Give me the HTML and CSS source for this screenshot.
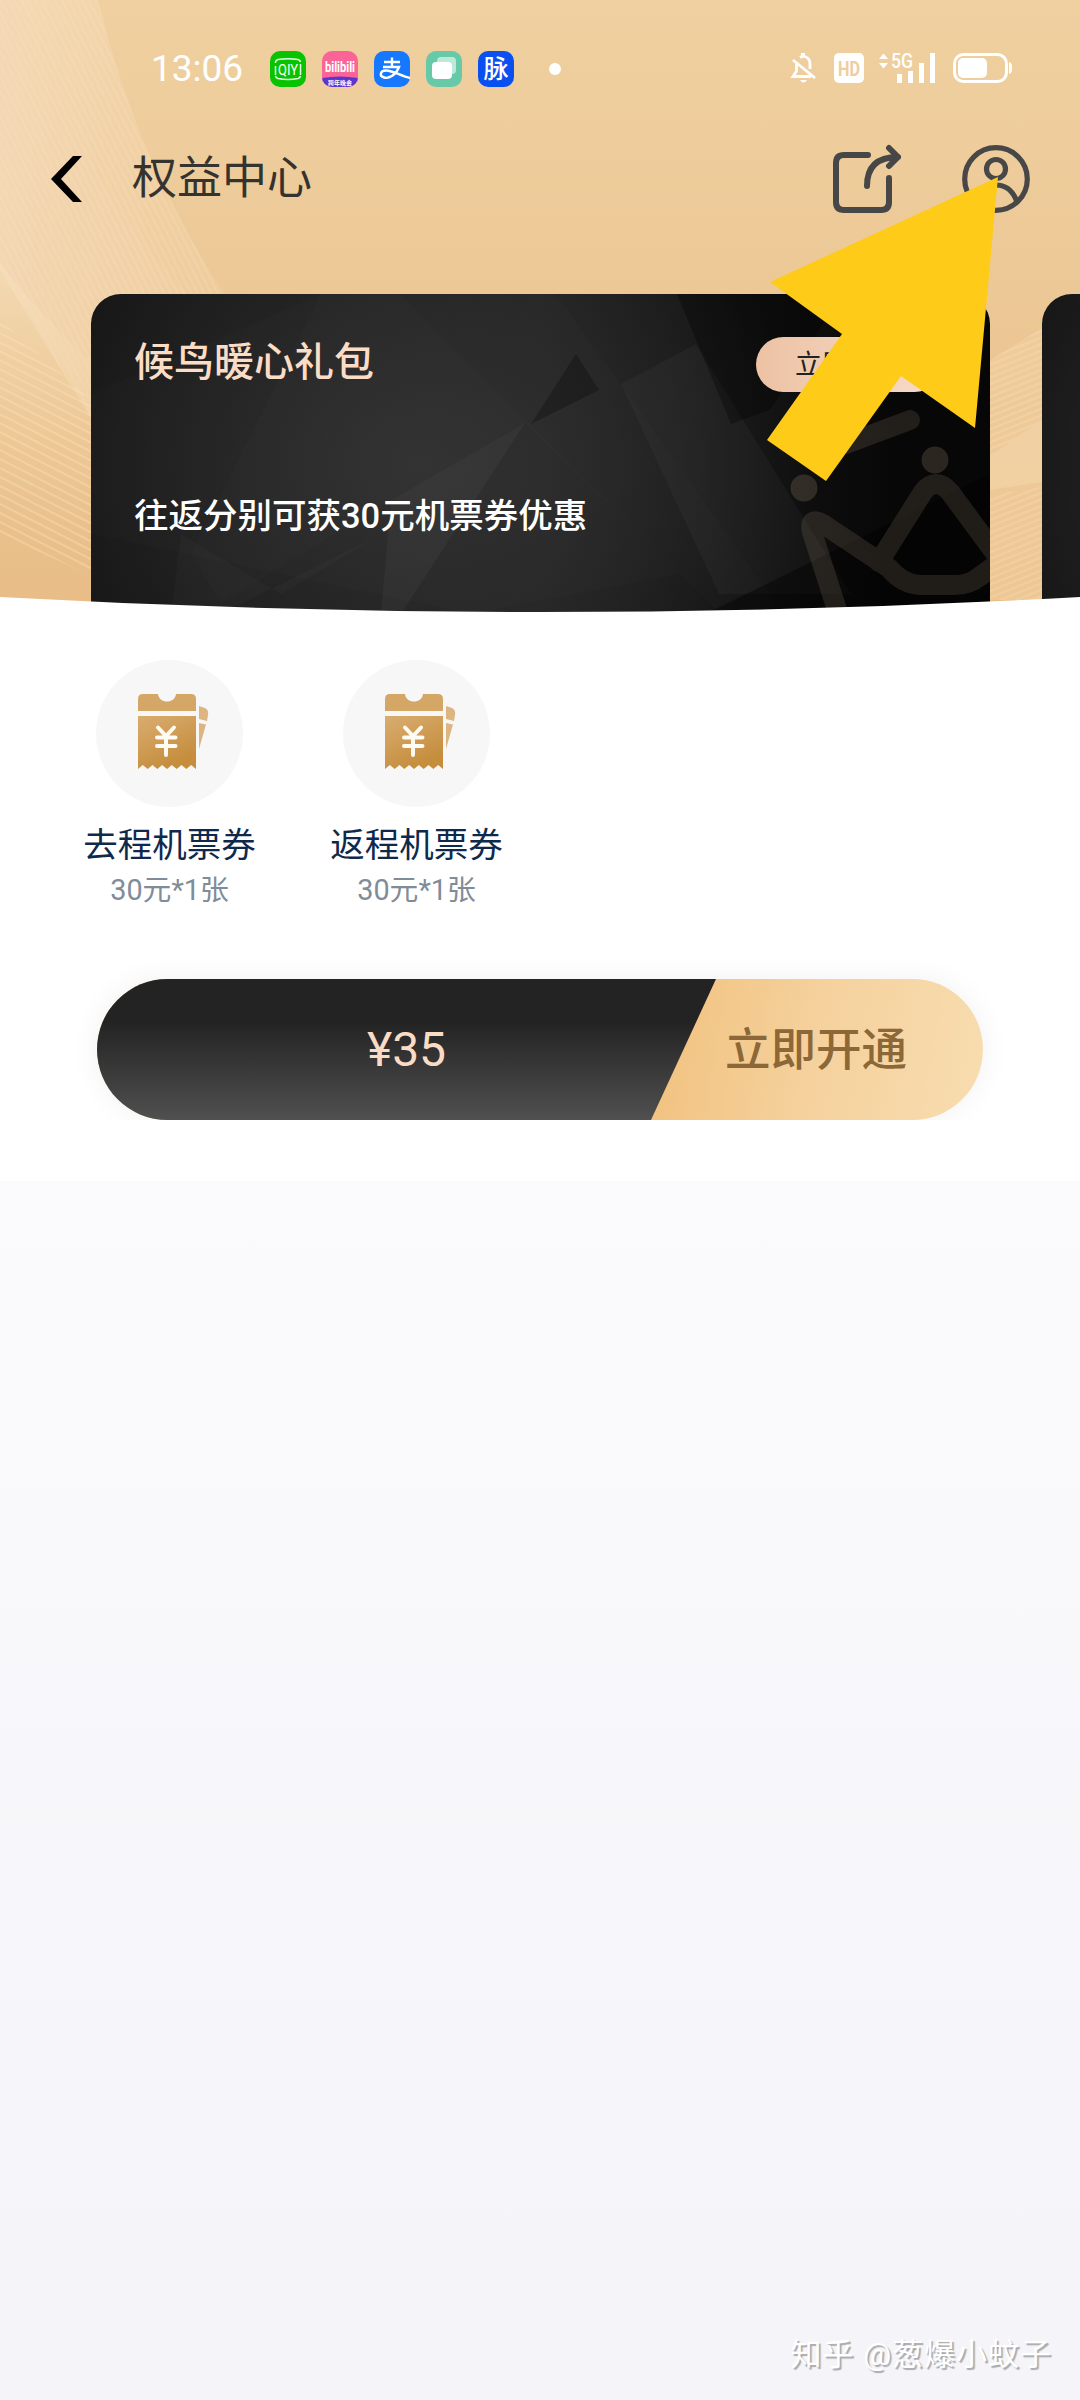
FILE: index.html
```html
<!DOCTYPE html>
<html lang="zh-CN">
<head>
<meta charset="utf-8">
<title>权益中心</title>
<link rel="stylesheet" href="styles.css">
</head>
<body>
<main class="screen">
  <section class="hero">
    <svg class="hero-bg" viewBox="0 0 1080 620" aria-hidden="true">
      <defs>
        <pattern id="steep" width="6" height="6" patternUnits="userSpaceOnUse" patternTransform="rotate(-27)"><path d="M1 0V6" stroke="#fbe3c2" stroke-width="1.2" opacity=".35"/></pattern>
        <pattern id="flat" width="8" height="8" patternUnits="userSpaceOnUse" patternTransform="rotate(27)"><path d="M0 1H8" stroke="#fbe0b8" stroke-width="2" opacity=".4"/></pattern>
        <pattern id="rise" width="6" height="6" patternUnits="userSpaceOnUse" patternTransform="rotate(-22)"><path d="M0 1H6" stroke="#fbe3c2" stroke-width="1.6" opacity=".35"/></pattern>
        <linearGradient id="fade" x1="0" x2="1"><stop stop-color="#f7e0c4" stop-opacity=".6"/><stop offset="1" stop-color="#f3d3a6" stop-opacity=".35"/></linearGradient>
        <linearGradient id="sink" x1="0" y1="0" x2="0" y2="1"><stop stop-color="#f6dfbd" stop-opacity=".75"/><stop offset="1" stop-color="#f0cc98" stop-opacity="0"/></linearGradient>
      </defs>
      <path d="M0 0H98Q136 160 228 300L92 420 0 270Z" fill="url(#fade)"/>
      <path d="M20 0Q80 190 188 294L92 364 0 265V0Z" fill="#f4d9b2" opacity=".2"/>
      <path d="M0 0H98Q136 160 228 300L92 420 0 270Z" fill="url(#steep)"/>
      <path d="M0 263Q40 315 92 363V560L0 520Z" fill="url(#sink)"/>
      <path d="M0 320L92 400V576L0 534Z" fill="url(#flat)"/>
      <path d="M990 360L1042 328V600H990Z" fill="#f4d3a4" opacity=".45"/>
      <path d="M990 456L1042 420V482L990 490Z" fill="#f6dcb4" opacity=".4"/>
      <path d="M990 360L1042 328V420L990 456ZM990 495L1042 487V600H990Z" fill="url(#rise)"/>
    </svg>

    <header class="status">
      <div class="status-left">
        <span class="time">13:06</span>
        <div class="apps">
          <svg class="app" viewBox="0 0 36 36"><rect width="36" height="36" rx="10" fill="#08c400"/><path d="M8 8.500Q18 7 28 8.500M8 27.500Q18 29.500 28 27.500M5.500 12V11Q6 9 8 8.500M28 8.500Q30 9 30.500 11M5.500 25Q6 27 8 27.500M28 27.500Q30 27 30.500 25M5.500 15V24M30.500 13V24" fill="none" stroke="#e9ffe5" stroke-width="1.500"/><text class="app-iqiyi" x="18" y="23.500" textLength="20" lengthAdjust="spacingAndGlyphs">QIY</text></svg>
          <svg class="app" viewBox="0 0 36 36"><defs><clipPath id="round"><rect width="36" height="36" rx="10"/></clipPath></defs><g clip-path="url(#round)"><path fill="#fb6496" d="M0 0H36V36H0z"/><path fill="#5c35cf" d="M0 27Q18 24 36 27V36H0z"/></g><text class="app-bili" x="18" y="21" textLength="30" lengthAdjust="spacingAndGlyphs">bilibili</text><text class="app-gala" x="18" y="33.500">跨年晚会</text></svg>
          <svg class="app" viewBox="0 0 36 36"><rect width="36" height="36" rx="10" fill="#1677ff"/><path d="M10 11H26M18 6.500V15M9 16H25C22 24 15 28 10 26.500 5 25 6 19.500 12 19.500 19 19.500 27 25 36 27" fill="none" stroke="#fff" stroke-width="2.400"/></svg>
          <svg class="app" viewBox="0 0 36 36"><rect width="36" height="36" rx="10" fill="#66c9a7"/><rect x="11" y="6" width="19" height="17" rx="4" fill="#bce9d9"/><rect x="6" y="11" width="20" height="17" rx="4" fill="#fff"/></svg>
          <svg class="app" viewBox="0 0 36 36"><rect width="36" height="36" rx="10" fill="#0a50f0"/><text class="app-mai" x="18" y="27">脉</text></svg>
        </div>
        <i class="dot"></i>
      </div>
      <svg class="signals" viewBox="0 0 222 34">
        <g fill="none" stroke="#fff" stroke-width="2.800"><path d="M6.500 13V20L3 25.500H21M10 6.500Q14 4 17.500 7 20 9 20 13V18"/><path d="M3 9L25 27"/></g><path d="M11 2h4v4h-4zM10 29h7q-3.500 5-7 0z" fill="#fff"/>
        <rect x="44" y="2" width="30" height="30" rx="5" fill="#fff"/><text class="hd" x="59" y="24.500" textLength="22" lengthAdjust="spacingAndGlyphs">HD</text>
        <path d="M89 8L93.500 2.500 98 8zM89 12L93.500 17.500 98 12z" fill="#fff"/><text class="net" x="101" y="16.500" textLength="22" lengthAdjust="spacingAndGlyphs">5G</text>
        <path d="M107 23h5v9h-5zM118 20h5v12h-5zM129 12h5v20h-5zM140 2h5v30h-5z" fill="#fff"/>
        <rect x="164.500" y="3.500" width="52" height="27" rx="9" fill="none" stroke="#fff" stroke-width="3"/><rect x="168" y="7" width="29" height="20" rx="5" fill="#fff"/><path d="M219 11q3 1 3 3v6q0 2-3 3z" fill="#fff"/>
      </svg>
    </header>

    <nav class="navbar">
      <svg class="back" viewBox="0 0 32 46"><path d="M31 0H22L0 23 22 46H31L10 23Z" fill="#000"/></svg>
      <h1 class="nav-title">权益中心</h1>
      <svg class="share" viewBox="0 0 70 70"><g fill="none" stroke="#474747" stroke-width="6" stroke-linecap="round" stroke-linejoin="round"><path d="M36 11H12Q4 11 4 19V58Q4 66 12 66H49Q57 66 57 58V34M35 42Q35 13 66 13M57 4L66 13 57 22"/></g></svg>
      <svg class="user" viewBox="0 0 68 68"><g fill="none" stroke="#474747" stroke-width="5.200"><circle cx="34" cy="34" r="31.300"/><circle cx="34" cy="24" r="9.500"/><path d="M12 57Q19 40 34 40 49 40 55 57"/></g></svg>
    </nav>

    <div class="carousel">
      <article class="card">
        <svg class="facets" viewBox="0 0 899 340" preserveAspectRatio="xMidYMin slice" aria-hidden="true">
          <g fill="#fff">
            <path d="M0 100L230 0H310L590 280 380 320 0 240Z" opacity=".012"/>
            <path d="M434 129L300 206 290 320H310Z" opacity=".035"/>
            <path d="M230 0H310L434 129 300 206 130 310 100 260Z" opacity=".012"/>
            <path d="M310 0L434 129 640 330H700L530 90 465 0Z" opacity=".012"/>
            <path d="M530 90L605 50 760 300 628 300Z" opacity=".03"/>
            <path d="M90 240L190 300 290 240 130 320H80Z" opacity=".02"/>
          </g>
          <path d="M485 60L508 96 440 130Z" opacity=".25"/>
          <path d="M586 0H750L680 115 640 130Z" opacity=".3"/>
          <path d="M594 330L899 180V340Z" opacity=".4"/>
          <g fill="none" stroke="#c4ab88" stroke-opacity=".15" stroke-width="20" stroke-linecap="round" stroke-linejoin="round">
            <path d="M748 322L721 238Q717 222 732 230L798 274Q811 290 829 291H864Q878 291 888 283L902 273Q910 267 904 259L859 198Q845 182 832 198L788 268"/>
            <path d="M755 150L819 126"/>
          </g>
          <g fill="#c4ab88" opacity=".19"><circle cx="713" cy="194" r="13.500"/><circle cx="844" cy="166" r="13.500"/></g>
        </svg>
        <div class="card-head">
          <h2 class="card-title">候鸟暖心礼包</h2>
          <span class="pill">立即开通</span>
        </div>
        <p class="card-text">往返分别可获30元机票券优惠</p>
      </article>
      <article class="card"></article>
    </div>

    <svg class="curve" viewBox="0 0 1080 26" aria-hidden="true"><path d="M0 5Q540 35 1080 5V26H0Z" fill="#fff"/></svg>
  </section>

  <section class="panel">
    <ul class="benefits">
      <li class="benefit">
        <span class="badge">
          <svg class="ticket" viewBox="0 0 72 77">
            <defs><linearGradient id="gold" x1="0" y1="0" x2=".5" y2="1"><stop stop-color="#d9ad70"/><stop offset="1" stop-color="#c58d3c"/></linearGradient></defs>
            <path d="M5 0H20C21 10 37 10 38 0H53Q58 0 58 5V17H0V5Q0 0 5 0Z" fill="#d5a767"/>
            <path d="M0 22H58V75L53.200 71 48.300 75 43.500 71 38.700 75 33.800 71 29 75 24.200 71 19.300 75 14.500 71 9.700 75 4.800 71 0 75Z" fill="url(#gold)"/>
            <path d="M61 12L67 14Q71 16 70 21L69 27 61 25ZM61 29L68 30.500 61 55Z" fill="#dcb581"/>
            <path d="M20 33.500L28 42 36 33.500M28 42V61M19 43.500H37.500M19 52H37.500" fill="none" stroke="#fffaf2" stroke-width="4" stroke-linecap="round"/>
          </svg>
        </span>
        <span class="benefit-name">去程机票券</span>
        <span class="benefit-count">30元*1张</span>
      </li>
      <li class="benefit">
        <span class="badge">
          <svg class="ticket" viewBox="0 0 72 77">
            <path d="M5 0H20C21 10 37 10 38 0H53Q58 0 58 5V17H0V5Q0 0 5 0Z" fill="#d5a767"/>
            <path d="M0 22H58V75L53.200 71 48.300 75 43.500 71 38.700 75 33.800 71 29 75 24.200 71 19.300 75 14.500 71 9.700 75 4.800 71 0 75Z" fill="url(#gold)"/>
            <path d="M61 12L67 14Q71 16 70 21L69 27 61 25ZM61 29L68 30.500 61 55Z" fill="#dcb581"/>
            <path d="M20 33.500L28 42 36 33.500M28 42V61M19 43.500H37.500M19 52H37.500" fill="none" stroke="#fffaf2" stroke-width="4" stroke-linecap="round"/>
          </svg>
        </span>
        <span class="benefit-name">返程机票券</span>
        <span class="benefit-count">30元*1张</span>
      </li>
    </ul>
    <div class="buy-wrap">
      <div class="buy">
        <span class="price">¥35</span>
        <span class="cta">立即开通</span>
      </div>
    </div>
  </section>

  <footer class="watermark">知乎 @葱爆小蚊子</footer>

  <svg class="pointer" viewBox="0 0 231 304" aria-hidden="true"><path d="M231 0L208 251 134 199 59 304 0 263 75 157 3 105Z" fill="#ffcb19"/></svg>
</main>
</body>
</html>
```
FILE: styles.css
```css
* { box-sizing: border-box; margin: 0; padding: 0; }

body {
  width: 1080px;
  font-family: Roboto, "Noto Sans CJK SC", sans-serif;
  background: #f4f4f9;
}

.screen {
  position: relative;
  display: flex;
  flex-direction: column;
  width: 1080px;
  height: 2400px;
  overflow: hidden;
  background: linear-gradient(#fbfbfd 1181px, #f4f4f9 2300px);
}

/* Gold header */
.hero {
  position: relative;
  height: 618px;
  overflow: hidden;
  background: linear-gradient(#f0d0a0, #ecc896 300px, #e8bd87 600px);
}
.hero-bg { position: absolute; left: 0; top: 0; width: 1080px; height: 620px; }
.curve { position: absolute; left: 0; bottom: 0; width: 1080px; height: 26px; }

.status {
  position: relative;
  display: flex;
  justify-content: space-between;
  height: 136px;
  padding: 51px 68px 0 151px;
}
.status-left { display: flex; align-items: center; height: 35px; }
.time { width: 119px; font-size: 37px; line-height: 35px; color: #fff; }
.apps { display: flex; gap: 16px; }
.app { width: 36px; height: 36px; overflow: visible; }
.app text { fill: #fff; text-anchor: middle; }
.app-iqiyi { font-size: 15px; }
.app-bili { font-size: 14px; font-weight: 700; }
.app-gala { font: 700 6px "Noto Sans CJK SC", sans-serif; }
.app-mai { font: 500 25px "Noto Sans CJK SC", sans-serif; }
.dot { width: 12px; height: 12px; margin-left: 35px; border-radius: 50%; background: #fff; }
.signals { width: 222px; height: 34px; overflow: visible; }
.hd { font-size: 21px; font-weight: 700; fill: #eecd9e; text-anchor: middle; }
.net { font-size: 20px; font-weight: 500; fill: #fff; }

.navbar {
  position: relative;
  display: flex;
  align-items: center;
  height: 86px;
  padding: 0 50px 0 51px;
}
.back { width: 32px; height: 46px; }
.nav-title {
  flex: 1;
  margin-left: 49px;
  font-size: 45px;
  font-weight: 400;
  line-height: 60px;
  color: #35332f;
}
.share { width: 70px; height: 70px; margin-right: 60px; }
.user { width: 68px; height: 68px; }

/* Package cards */
.carousel { position: relative; display: flex; gap: 52px; margin: 72px 0 0 91px; }
.card {
  position: relative;
  flex: none;
  width: 899px;
  height: 340px;
  padding: 43px 0 0 43px;
  border-radius: 30px;
  overflow: hidden;
  background:
    radial-gradient(400px 320px at 330px 170px, #302f2f, rgba(48, 47, 47, 0)),
    linear-gradient(90deg, #161616, #222121 50%, #070707 90%);
}
.facets { position: absolute; left: 0; top: 0; width: 899px; height: 340px; }
.card-head { position: relative; display: flex; justify-content: space-between; height: 55px; padding-right: 48px; }
.card-title { padding-top: 2px; font-size: 40px; font-weight: 500; line-height: 48px; color: #fbdcc4; }
.pill {
  width: 186px;
  height: 55px;
  border-radius: 28px;
  background: linear-gradient(90deg, #edc2a4, #f6dcc9);
  font-size: 27px;
  line-height: 56px;
  text-align: center;
  color: #222;
}
.card-text {
  position: relative;
  margin-top: 102px;
  font-size: 34.5px;
  font-weight: 500;
  line-height: 44px;
  color: #fff;
}

/* Benefits and purchase */
.panel { height: 563px; background: #fff; }
.benefits { display: flex; height: 343px; padding: 42px 46px 0; list-style: none; }
.benefit { display: flex; flex-direction: column; align-items: center; width: 247px; }
.badge { width: 147px; height: 147px; padding: 34px 0 0 42px; border-radius: 50%; background: #f7f7f7; }
.ticket { display: block; width: 72px; height: 77px; }
.benefit-name { margin-top: 15px; font-size: 34.5px; line-height: 46px; color: #0f294d; }
.benefit-count { margin-top: 4px; font-size: 28.8px; line-height: 36px; color: #808c98; }

.buy-wrap { height: 159px; padding: 18px 97px 0; overflow: hidden; }
.buy {
  display: flex;
  height: 141px;
  border-radius: 71px;
  overflow: hidden;
  background: linear-gradient(100deg, #f1c27f 62%, #f5d19d 80%, #f8ddb0);
  box-shadow: 0 0 30px rgba(0, 0, 0, .06);
}
.price {
  width: 619px;
  clip-path: polygon(0 0, 100% 0, 554px 100%, 0 100%);
  background: linear-gradient(#232323 30%, #505050);
  font-size: 48px;
  line-height: 141px;
  text-align: center;
  color: #fadcc5;
}
.cta { padding: 1px 0 0 9px; font-size: 45.5px; font-weight: 500; line-height: 141px; color: #8c6737; }

.watermark {
  margin-top: auto;
  padding: 0 28px 23px 0;
  font-size: 31px;
  letter-spacing: 1px;
  line-height: 44px;
  text-align: right;
  color: #fff;
  text-shadow: 2px 2px 1px #aaa;
}

.pointer { position: absolute; left: 767px; top: 177px; width: 231px; height: 304px; }
```
